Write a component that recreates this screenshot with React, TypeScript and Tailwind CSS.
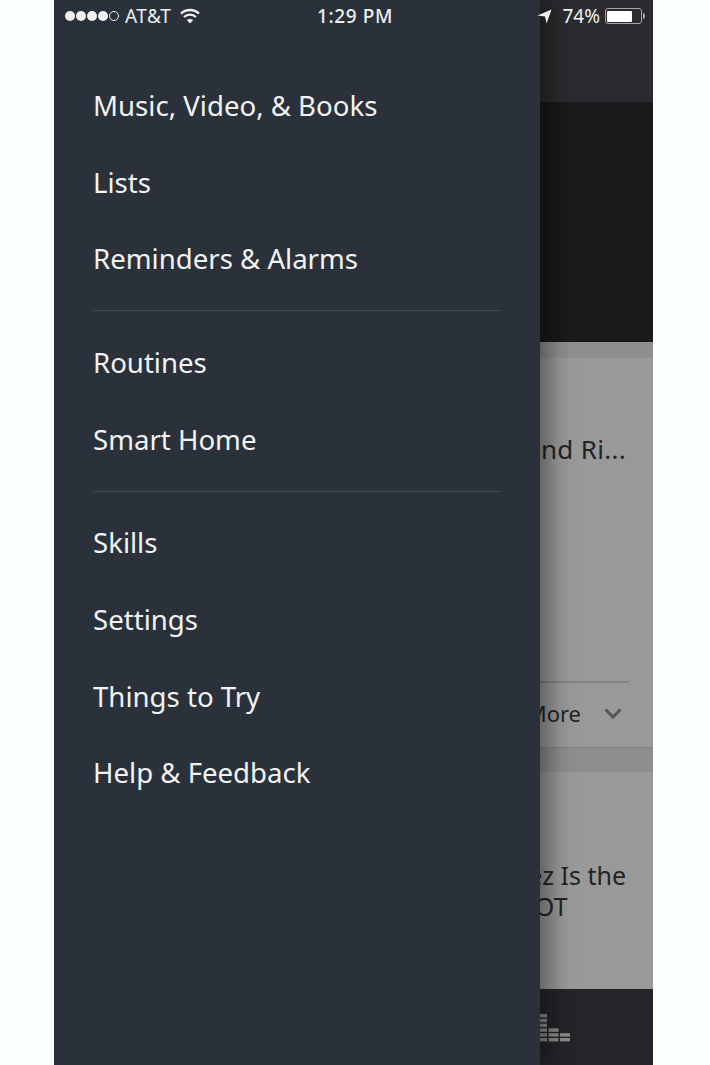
const groups = [
  [
    { label: 'Music, Video, & Books' },
    { label: 'Lists' },
    { label: 'Reminders & Alarms' },
  ],
  [{ label: 'Routines' }, { label: 'Smart Home' }],
  [
    { label: 'Skills' },
    { label: 'Settings' },
    { label: 'Things to Try' },
    { label: 'Help & Feedback' },
  ],
]

function EqualizerIcon() {
  const bars = [
    { x: 0, n: 6 },
    { x: 11.5, n: 3 },
    { x: 23, n: 2 },
  ]
  return (
    <svg width="34" height="30" viewBox="0 0 34 30" fill="#8c8c8c">
      {bars.map((b) =>
        Array.from({ length: b.n }).map((_, i) => (
          <rect key={`${b.x}-${i}`} x={b.x} y={25 - i * 4.8} width="10" height="3.4" />
        ))
      )}
    </svg>
  )
}

function StatusBar() {
  return (
    <div className="absolute left-0 top-0 z-20 flex h-[32px] w-full items-center justify-between pl-[11px] pr-[8px] text-[19px] leading-none text-[#eef0f1]">
      <div className="flex w-[240px] items-center">
        <div className="flex items-center gap-[1px]">
          <span className="h-[10px] w-[10px] rounded-full bg-[#f0f0f0]" />
          <span className="h-[10px] w-[10px] rounded-full bg-[#f0f0f0]" />
          <span className="h-[10px] w-[10px] rounded-full bg-[#f0f0f0]" />
          <span className="h-[10px] w-[10px] rounded-full bg-[#f0f0f0]" />
          <span className="h-[10px] w-[10px] rounded-full border border-[#f0f0f0]" />
        </div>
        <span className="ml-[6px] tracking-[0.5px]">AT&amp;T</span>
        <svg className="ml-[9px]" width="20" height="16" viewBox="0 0 20 16" fill="none" stroke="#f4f4f4" strokeWidth="2.4">
          <path d="M1 5.6C6 .8 14 .8 19 5.6" />
          <path d="M4 9c3.4-3.2 8.6-3.2 12 0" />
          <path d="M10 15.6L6.8 12c1.8-1.5 4.6-1.5 6.4 0z" fill="#f4f4f4" stroke="none" />
        </svg>
      </div>
      <span className="font-medium tracking-[0.6px]">1:29 PM</span>
      <div className="flex w-[240px] items-center justify-end">
        <svg width="15" height="15" viewBox="0 0 15 15" fill="#f0f0f0">
          <path d="M14.5 .5L9.6 14.5 8 7.6 .5 6.6z" />
        </svg>
        <span className="ml-[10px]">74%</span>
        <div className="ml-[5px] flex h-[16px] w-[37px] items-center rounded-[3px] border border-[#a5a5a5] p-[1.5px]">
          <div className="h-full w-[25px] rounded-[1px] bg-white" />
        </div>
        <span className="ml-[1px] h-[6px] w-[2px] rounded-r-sm bg-[#a5a5a5]" />
      </div>
    </div>
  )
}

function Drawer() {
  return (
    <nav className="absolute left-0 top-0 z-10 h-full w-[486px] bg-[#2a313b] pl-[39px] pr-[39px] pt-[67.4px] shadow-[10px_0_22px_rgba(0,0,0,0.4)]">
      {groups.map((items, i) => (
        <div key={i} className={i > 0 ? 'mt-[13px] border-t border-[#444b55] pt-[13px]' : ''}>
          {items.map((item) => (
            <div key={item.label} className="flex h-[76.7px] items-center text-[27.6px] leading-none text-[#f2f3f3]">
              {item.label}
            </div>
          ))}
        </div>
      ))}
    </nav>
  )
}

export default function App() {
  return (
    <div className="h-[1065px] w-[710px] overflow-hidden bg-[#fbffff] pl-[54px] pr-[57px] font-['Noto_Sans',sans-serif]">
      <div className="relative flex h-full w-[599px] flex-col overflow-hidden">
        <StatusBar />
        <Drawer />

        {/* Page behind the drawer */}
        <div className="h-[102px] bg-[#2a2b2e]" />
        <div className="h-[240px] bg-[#1a1a1a]" />
        <div className="h-[16px] bg-[#8f8f8f]" />
        <div className="flex h-[389px] flex-col items-end bg-[#999999] pr-[24px] text-[26px] text-[#222325]">
          <div className="mr-[3px] mt-[75px] leading-[32px] tracking-[0.3px]">Stand Ri...</div>
          <div className="mt-auto w-[300px] border-b-2 border-[#828282]" />
          <div className="flex h-[64px] items-center pb-[4px] pr-[7px] text-[22px]">
            <span>More</span>
            <svg className="ml-[23px]" width="18" height="11" viewBox="0 0 18 11" fill="none" stroke="#545454" strokeWidth="3">
              <path d="M1.5 1.5L9 9l7.5-7.5" />
            </svg>
          </div>
        </div>
        <div className="h-[25px] border-t border-[#838383] bg-[#8e8e8e]" />
        <div className="flex h-[217px] flex-col items-end bg-[#999999] pr-[27px] text-[25px] leading-[31px] text-[#222325]">
          <div className="mt-[88px] w-[300px] text-right">Martinez Is the</div>
          <div className="w-[300px] pl-[180px] text-left">SPOT</div>
        </div>
        <div className="flex-1 bg-[#242528] pl-[483px] pt-[24px]">
          <EqualizerIcon />
        </div>
      </div>
    </div>
  )
}
